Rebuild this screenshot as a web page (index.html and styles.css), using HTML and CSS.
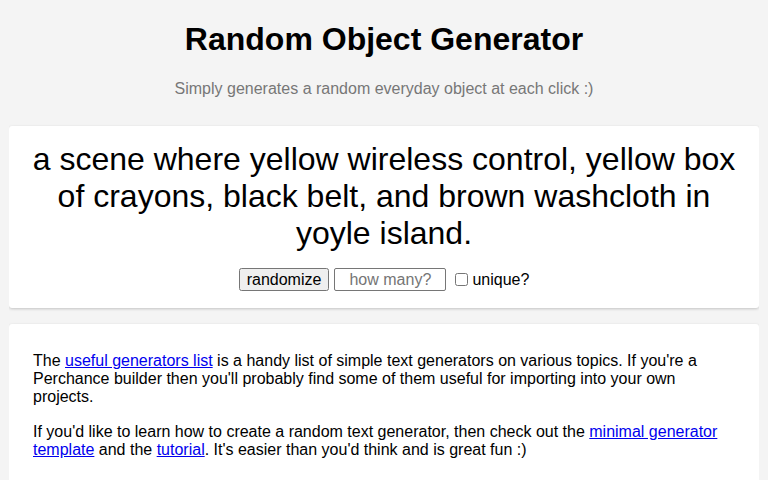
FILE: index.html
```html
<!DOCTYPE html>
<html lang="en">
<head>
  <meta charset="UTF-8">
  <meta name="viewport" content="width=device-width, initial-scale=1.0">
  <title>Random Object Generator</title>
  <link rel="stylesheet" href="styles.css">
</head>
<body>
  <!-- Header -->
  <h1>Random Object Generator</h1>
  <p class="subtitle">Simply generates a random everyday object at each click :)</p>

  <!-- Output card -->
  <div class="card output-card">
    <div id="output">a scene where yellow wireless control, yellow box of crayons, black belt, and brown washcloth in yoyle island.</div>
    <div class="controls">
      <button>randomize</button>
      <input type="number" placeholder="how many?">
      <label><input type="checkbox">unique?</label>
    </div>
  </div>

  <!-- Info card -->
  <div class="card info-card">
    <p>The <a href="#">useful generators list</a> is a handy list of simple text generators on various topics. If you're a Perchance builder then you'll probably find some of them useful for importing into your own projects.</p>
    <p>If you'd like to learn how to create a random text generator, then check out the <a href="#">minimal generator template</a> and the <a href="#">tutorial</a>. It's easier than you'd think and is great fun :)</p>
  </div>
</body>
</html>
```

FILE: styles.css
```css
body {
  font-family: "Liberation Sans", Arial, sans-serif;
  background-color: #f4f4f4;
  margin: 0 9px;
  color: #000;
}

h1 {
  font-size: 32px;
  text-align: center;
  margin: 21px 0 0;
}

.subtitle {
  color: #777;
  font-size: 16px;
  text-align: center;
  margin: 22px 0 28px;
}

.card {
  background-color: white;
  border-radius: 3px;
  box-shadow: 0 1px 3px rgba(0, 0, 0, 0.2);
}

.output-card {
  text-align: center;
  padding: 15px 20px 17px;
  margin-bottom: 16px;
}

#output {
  font-size: 32px;
  margin-bottom: 16px;
}

.controls {
  display: flex;
  justify-content: center;
  align-items: center;
  font-size: 16px;
}

.controls button {
  font-family: inherit;
  font-size: 16px;
  height: 23px;
  padding: 0 6px;
  margin-right: 5px;
}

.controls input[type="number"] {
  font-family: inherit;
  font-size: 16px;
  width: 112px;
  height: 23px;
  box-sizing: border-box;
  padding: 0 4px;
  border: 1px solid #767676;
  border-radius: 2px;
  text-align: center;
  -moz-appearance: textfield;
}

.controls input[type="number"]::-webkit-inner-spin-button {
  -webkit-appearance: none;
}

.controls label {
  display: flex;
  align-items: center;
  margin-left: 9px;
}

.controls input[type="checkbox"] {
  margin: 0 4px 0 0;
  width: 13px;
  height: 13px;
}

.info-card {
  padding: 12px 24px 16px;
  font-size: 16px;
}

.info-card p {
  margin: 16px 0 17px;
}
```
